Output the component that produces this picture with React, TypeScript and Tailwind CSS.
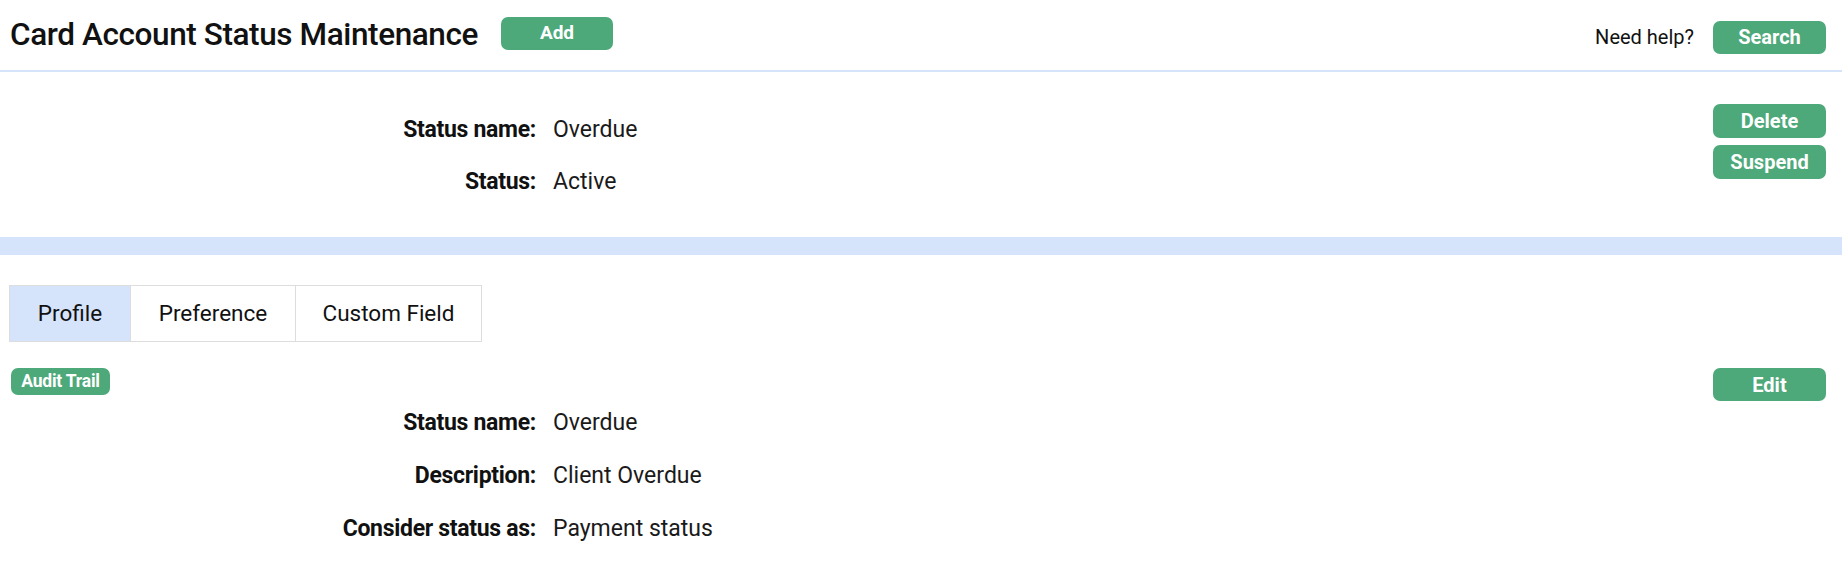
import React, { useState } from 'react';

const font = { fontFamily: 'Roboto, "Noto Sans", sans-serif' };

const GreenButton: React.FC<{ label: string; className?: string }> = ({ label, className = '' }) => (
  <button
    className={`bg-[#4da87a] text-white font-bold rounded-[7px] flex items-center justify-center ${className}`}
  >
    {label}
  </button>
);

const Field: React.FC<{ label: string; value: string }> = ({ label, value }) => (
  <div className="flex items-center h-[30px] leading-[30px]">
    <div className="w-[536px] text-right font-bold text-[23px] text-[#111] tracking-[-0.3px]">{label}</div>
    <div className="pl-[17px] text-[23px] text-[#1a1a1a]">{value}</div>
  </div>
);

const tabs = [
  { name: 'Profile', width: 'w-[120px]' },
  { name: 'Preference', width: 'w-[165px]' },
  { name: 'Custom Field', width: 'w-[186px]' },
];

export default function App() {
  const [active, setActive] = useState('Profile');

  return (
    <div className="w-[1842px] h-[565px] bg-white overflow-hidden" style={font}>
      {/* header */}
      <div className="h-[72px] border-b-2 border-[#d6e4fb] flex items-center justify-between pl-[10px] pr-[16px]">
        <div className="flex items-center">
          <h1 className="text-[31.5px] font-medium text-[#111] tracking-[-0.4px]">Card Account Status Maintenance</h1>
          <GreenButton label="Add" className="ml-[23px] w-[112px] h-[33px] text-[19px] mb-[4px]" />
        </div>
        <div className="flex items-center mt-[4px]">
          <span className="text-[20px] text-[#111] mr-[19px]">Need help?</span>
          <GreenButton label="Search" className="w-[113px] h-[33px] text-[20px]" />
        </div>
      </div>

      {/* summary */}
      <div className="h-[165px] flex justify-between pr-[16px]">
        <div className="flex flex-col gap-[22px] pt-[43px]">
          <Field label="Status name:" value="Overdue" />
          <Field label="Status:" value="Active" />
        </div>
        <div className="flex flex-col gap-[7px] pt-[32px]">
          <GreenButton label="Delete" className="w-[113px] h-[34px] text-[20px]" />
          <GreenButton label="Suspend" className="w-[113px] h-[34px] text-[20px]" />
        </div>
      </div>

      <div className="h-[18px] bg-[#d6e4fb]" />

      {/* tabs */}
      <div className="pt-[30px] pl-[9px]">
        <div className="flex border border-[#dddddd] w-max">
          {tabs.map((t, i) => (
            <button
              key={t.name}
              onClick={() => setActive(t.name)}
              className={`${t.width} h-[55px] flex items-center justify-center text-[22.5px] text-[#111] ${
                i > 0 ? 'border-l border-[#dddddd]' : ''
              } ${active === t.name ? 'bg-[#d6e4fb]' : 'bg-white'}`}
            >
              {t.name}
            </button>
          ))}
        </div>
      </div>

      {/* profile */}
      <div className="flex justify-between items-start pl-[11px] pr-[16px] pt-[26px]">
        <GreenButton label="Audit Trail" className="w-[99px] h-[27px] text-[17.5px] rounded-[6px] tracking-[-0.2px]" />
        <GreenButton label="Edit" className="w-[113px] h-[33px] text-[20px]" />
      </div>
      <div className="flex flex-col gap-[23px] mt-[7px]">
        <Field label="Status name:" value="Overdue" />
        <Field label="Description:" value="Client Overdue" />
        <Field label="Consider status as:" value="Payment status" />
      </div>
    </div>
  );
}
